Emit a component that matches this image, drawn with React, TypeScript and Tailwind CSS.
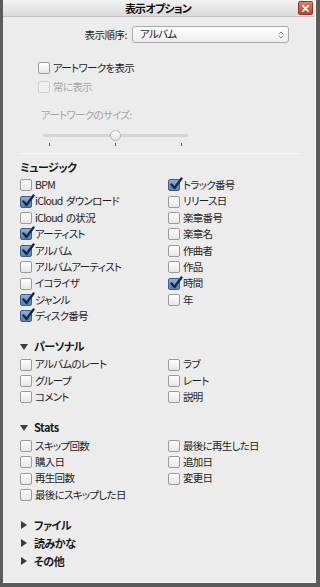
import React from 'react';

type Item = { label: string; checked?: boolean };

const FONT = "font-['Noto_Sans_CJK_JP','Liberation_Sans',sans-serif] [font-feature-settings:'palt']";

const music: [Item[], Item[]] = [
  [
    { label: 'BPM' },
    { label: 'iCloud\u00a0 ダウンロード', checked: true },
    { label: 'iCloud\u00a0 の状況' },
    { label: 'アーティスト', checked: true },
    { label: 'アルバム', checked: true },
    { label: 'アルバムアーティスト' },
    { label: 'イコライザ' },
    { label: 'ジャンル', checked: true },
    { label: 'ディスク番号', checked: true },
  ],
  [
    { label: 'トラック番号', checked: true },
    { label: 'リリース日' },
    { label: '楽章番号' },
    { label: '楽章名' },
    { label: '作曲者' },
    { label: '作品' },
    { label: '時間', checked: true },
    { label: '年' },
  ],
];

const personal: [Item[], Item[]] = [
  [{ label: 'アルバムのレート' }, { label: 'グループ' }, { label: 'コメント' }],
  [{ label: 'ラブ' }, { label: 'レート' }, { label: '説明' }],
];

const stats: [Item[], Item[]] = [
  [{ label: 'スキップ回数' }, { label: '購入日' }, { label: '再生回数' }, { label: '最後にスキップした日' }],
  [{ label: '最後に再生した日' }, { label: '追加日' }, { label: '変更日' }],
];

const Box = ({ checked, disabled }: { checked?: boolean; disabled?: boolean }) => (
  <span
    className={`relative shrink-0 w-[12px] h-[12px] rounded-[2px] border ${
      disabled
        ? 'border-[#d0d0d0] bg-[#f0f0f0]'
        : checked
        ? 'border-[#3e5f8a] bg-gradient-to-b from-[#8fb0d6] to-[#5b80ad]'
        : 'border-[#9a9a9a] bg-gradient-to-b from-[#ffffff] to-[#e6e6e6]'
    }`}
  >
    {checked && (
      <svg viewBox="0 0 14 14" className="absolute left-[0px] top-[-3px] w-[14px] h-[14px]">
        <path d="M2.5 7.5 L5.5 11 L12.5 1.5" fill="none" stroke="#132a4d" strokeWidth="2.4" strokeLinecap="round" strokeLinejoin="round" />
      </svg>
    )}
  </span>
);

const Check = ({ label, checked, disabled }: Item & { disabled?: boolean }) => (
  <div className="flex items-center h-[16.4px] gap-[3px]">
    <Box checked={checked} disabled={disabled} />
    <span className={`text-[10.5px] tracking-[-0.7px] leading-none whitespace-nowrap ${disabled ? 'text-[#a6a6a6]' : 'text-[#1e1e1e]'}`}>{label}</span>
  </div>
);

const Columns = ({ cols }: { cols: [Item[], Item[]] }) => (
  <div className="grid grid-cols-[148px_1fr] pl-[17px]">
    <div className="flex flex-col">
      {cols[0].map(i => <Check key={i.label} {...i} />)}
    </div>
    <div className="flex flex-col">
      {cols[1].map(i => <Check key={i.label} {...i} />)}
    </div>
  </div>
);

const Tri = ({ open }: { open?: boolean }) => (
  <svg viewBox="0 0 8 8" className="w-[8px] h-[8px] shrink-0">
    {open ? <path d="M0 1 L8 1 L4 7 Z" fill="#3c3c3c" /> : <path d="M1 0 L7 4 L1 8 Z" fill="#3c3c3c" />}
  </svg>
);

const Heading = ({ label, open, toggle }: { label: string; open?: boolean; toggle?: boolean }) => (
  <div className="flex items-center h-[16px] pl-[17px] gap-[6px]">
    {toggle && <Tri open={open} />}
    <span className="text-[11px] tracking-[-0.5px] font-bold leading-none text-[#1a1a1a]">{label}</span>
  </div>
);

export default function App() {
  return (
    <div className={`w-[320px] h-[587px] bg-[#5b5b5b] overflow-hidden ${FONT}`}>
      <div className="ml-[3px] w-[313px] h-[583px] bg-[#ececec] border-r border-b border-[#f8f8f8] flex flex-col">
        {/* title bar */}
        <div className="h-[17px] flex items-center bg-gradient-to-b from-[#f2f2f2] to-[#dadada] border-b border-[#c4c4c4]">
          <div className="flex-1" />
          <span className="text-[11px] tracking-[-0.8px] font-bold text-[#111] leading-none">表示オプション</span>
          <div className="flex-1 flex justify-end pr-[2px]">
            <div className="w-[15px] h-[14px] rounded-[2px] bg-gradient-to-b from-[#d9826e] to-[#b4452e] border border-[#8e3a2a] flex items-center justify-center">
              <svg viewBox="0 0 8 8" className="w-[7px] h-[7px]">
                <path d="M1 1 L7 7 M7 1 L1 7" stroke="#fff" strokeWidth="1.8" strokeLinecap="round" />
              </svg>
            </div>
          </div>
        </div>

        {/* sort order */}
        <div className="mt-[9px] flex items-center justify-end pr-[26px] gap-[5px]">
          <span className="text-[10.5px] tracking-[-0.5px] text-[#1e1e1e]">表示順序:</span>
          <div className="w-[157px] h-[17px] rounded-[3px] border border-[#a9a9a9] bg-gradient-to-b from-[#ffffff] to-[#ececec] flex items-center justify-between pl-[7px] pr-[4px]">
            <span className="text-[10.5px] tracking-[-0.7px] leading-none text-[#1e1e1e]">アルバム</span>
            <svg viewBox="0 0 8 10" className="w-[6px] h-[8px]">
              <path d="M1 4 L4 1 L7 4 M1 6 L4 9 L7 6" fill="none" stroke="#777" strokeWidth="1.2" />
            </svg>
          </div>
        </div>

        {/* artwork */}
        <div className="mt-[16px] pl-[35px] flex flex-col">
          <div className="h-[19px] flex items-center"><Check label="アートワークを表示" /></div>
          <div className="h-[19px] flex items-center"><Check label="常に表示" disabled /></div>
          <span className="mt-[10px] pl-[3px] text-[10.5px] tracking-[-0.7px] leading-[16px] text-[#a3a3a3]">アートワークのサイズ:</span>
          <div className="ml-[5px] w-[145px] mt-[6px] h-[12px] flex items-center">
            <div className="flex-1 h-[3px] rounded bg-[#d4d4d4] flex items-center justify-center">
              <span className="w-[11px] h-[11px] rounded-full bg-gradient-to-b from-[#ffffff] to-[#e2e2e2] border border-[#b3b3b3]" />
            </div>
          </div>
          <div className="ml-[5px] w-[145px] mt-[2px] px-[6px] flex justify-between">
            <span className="w-px h-[3px] bg-[#555]" />
            <span className="w-px h-[3px] bg-[#555]" />
            <span className="w-px h-[3px] bg-[#555]" />
          </div>
        </div>

        <div className="mt-[7px] ml-[16px] w-[281px] h-px bg-[#d2d2d2] border-b border-[#f7f7f7]" />

        <div className="mt-[5px]"><Heading label="ミュージック" /></div>
        <div className="mt-[2px]"><Columns cols={music} /></div>

        <div className="mt-[14px]"><Heading label="パーソナル" open toggle /></div>
        <div className="mt-[2px]"><Columns cols={personal} /></div>

        <div className="mt-[14px]"><Heading label="Stats" open toggle /></div>
        <div className="mt-[2px]"><Columns cols={stats} /></div>

        <div className="mt-[14px] flex flex-col gap-[2px]">
          <Heading label="ファイル" toggle />
          <Heading label="読みかな" toggle />
          <Heading label="その他" toggle />
        </div>
      </div>
    </div>
  );
}
